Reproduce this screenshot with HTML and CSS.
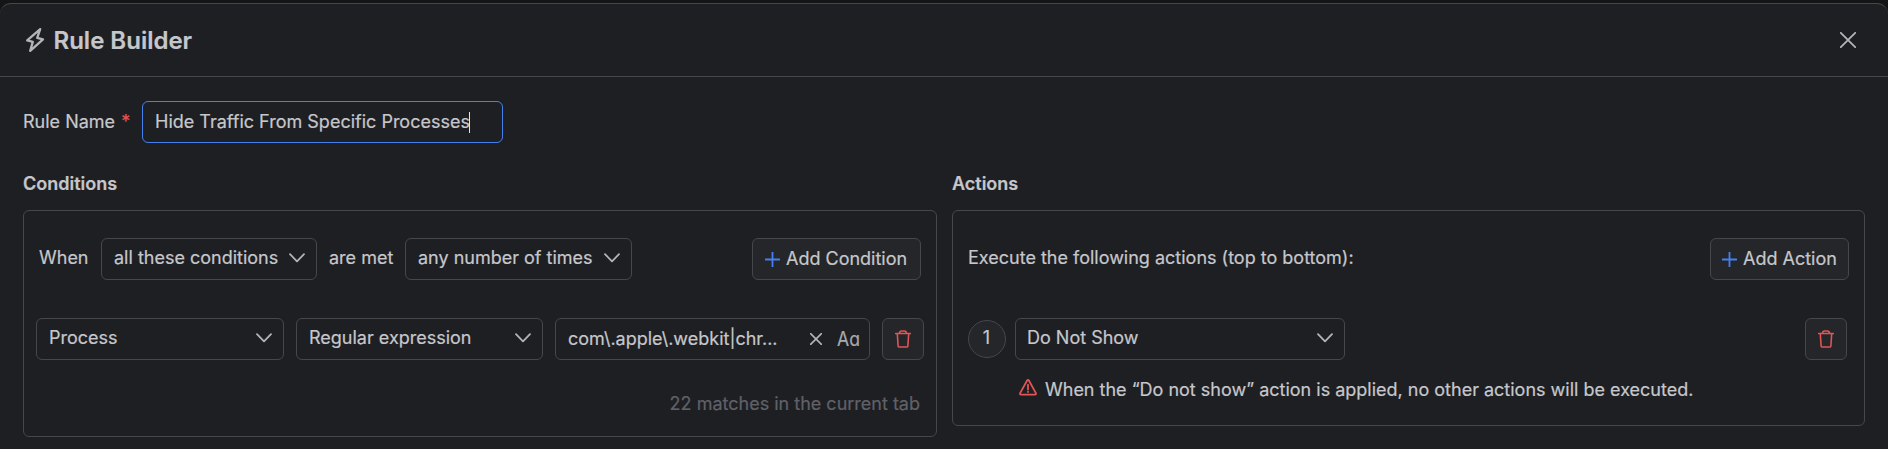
FILE: index.html
```html
<!DOCTYPE html>
<html lang="en">
<head>
<meta charset="utf-8">
<title>Rule Builder</title>
<link rel="stylesheet" href="styles.css">
</head>
<body>
<svg class="sprite" aria-hidden="true">
  <symbol id="chevron" viewBox="0 0 16 10"><path d="M1 1.2 8 8.4 15 1.2"/></symbol>
  <symbol id="plus" viewBox="0 0 15 15"><path d="M7.5 .5v14M.5 7.5h14"/></symbol>
  <symbol id="cross" viewBox="0 0 16 16"><path d="M.8 .8 15.2 15.2M15.2 .8 .8 15.2"/></symbol>
  <symbol id="cross-small" viewBox="0 0 12 12"><path d="M.6 .6 11.4 11.4M11.4 .6 .6 11.4"/></symbol>
  <symbol id="trash" viewBox="0 0 16 18"><path d="M.7 3.5h14.6M4.4 3.4q.3-2.4 2-2.4h3.2q1.7 0 2 2.4M2.3 3.8l.8 12c.1 .8 .5 1.2 1.2 1.2h7.4c.7 0 1.1-.4 1.2-1.2l.8-12"/></symbol>
</svg>
<main class="dialog">
  <header class="header">
    <svg class="bolt" viewBox="0 0 18 24"><path d="M14.2 1.2 1.2 12.4 6.8 13.9 4.2 22.8 17 11.4 11.2 9.9Z"/></svg>
    <h1 class="title">Rule Builder</h1>
    <button class="close" aria-label="Close"><svg><use href="#cross"/></svg></button>
  </header>
  <div class="name-row">
    <label class="name-label">Rule Name <span class="required">*</span></label>
    <div class="field name-field"><span>Hide Traffic From Specific Processes</span><i class="caret"></i></div>
  </div>
  <div class="columns">
    <section class="column">
      <h2 class="heading">Conditions</h2>
      <div class="panel conditions">
        <div class="bar">
          <span class="when">When</span>
          <div class="field select scope"><span>all these conditions</span><svg class="chevron"><use href="#chevron"/></svg></div>
          <span class="met">are met</span>
          <div class="field select times"><span>any number of times</span><svg class="chevron"><use href="#chevron"/></svg></div>
          <button class="field button add-condition"><svg class="plus"><use href="#plus"/></svg><span>Add Condition</span></button>
        </div>
        <div class="condition">
          <div class="field select"><span>Process</span><svg class="chevron"><use href="#chevron"/></svg></div>
          <div class="field select"><span>Regular expression</span><svg class="chevron"><use href="#chevron"/></svg></div>
          <div class="field pattern"><span>com\.apple\.webkit|chr...</span><svg class="clear"><use href="#cross-small"/></svg><span class="case">Aa</span></div>
          <button class="field button delete" aria-label="Delete"><svg class="trash"><use href="#trash"/></svg></button>
        </div>
        <p class="matches">22 matches in the current tab</p>
      </div>
    </section>
    <section class="column">
      <h2 class="heading">Actions</h2>
      <div class="panel actions">
        <div class="bar">
          <span class="execute">Execute the following actions (top to bottom):</span>
          <button class="field button add-action"><svg class="plus"><use href="#plus"/></svg><span>Add Action</span></button>
        </div>
        <div class="action">
          <span class="number">1</span>
          <div class="field select kind"><span>Do Not Show</span><svg class="chevron"><use href="#chevron"/></svg></div>
          <button class="field button delete" aria-label="Delete"><svg class="trash"><use href="#trash"/></svg></button>
        </div>
        <p class="warning"><svg class="alert" viewBox="0 0 18 17"><path d="M8.1 1.5q.9-1.3 1.8 0l7 12.6q.5 1.5-1 1.6H2.1q-1.5-.1-1-1.6ZM9 5.6v5M9 12.6v.5"/></svg><span>When the “Do not show” action is applied, no other actions will be executed.</span></p>
      </div>
    </section>
  </div>
</main>
</body>
</html>
```

FILE: styles.css
```css
* { box-sizing: border-box; }
body {
  margin: 0;
  padding-top: 3px;
  height: 449px;
  overflow: hidden;
  background: #141517;
  color: #c6c7cb;
  font: 18px/22px Inter, "Liberation Sans", sans-serif;
  -webkit-text-stroke: .2px;
}
svg { fill: none; stroke: #b3b4b8; stroke-width: 1.8; stroke-linecap: round; stroke-linejoin: round; flex: none; overflow: visible; }
.sprite { position: absolute; width: 0; height: 0; }
h1, h2, p { margin: 0; }
button { font: inherit; color: inherit; }
.dialog { height: 460px; background: #1e1f23; border-top: 1px solid #46474d; border-radius: 11px 11px 0 0; }
.header { display: flex; align-items: center; height: 73px; padding: 0 32px 0 26px; border-bottom: 1px solid #46474d; }
.bolt { width: 18px; height: 24px; stroke-width: 2.3; }
.title { margin-left: 9.5px; padding-top: 2px; font-size: 24px; line-height: 30px; font-weight: 600; }
.close { margin-left: auto; width: 16px; height: 16px; padding: 0; border: 0; background: none; }
.close svg { display: block; width: 16px; height: 16px; }
.name-row { display: flex; align-items: center; height: 42px; margin: 24px 0 0 23px; }
.name-label { width: 119px; white-space: nowrap; }
.required { color: #e05555; margin-left: 1px; }
.field { display: flex; align-items: center; height: 42px; border: 1px solid #46474d; border-radius: 6px; white-space: nowrap; }
.name-field { width: 361px; padding-left: 12px; border-color: #4480f0; }
.caret { width: 1px; height: 21px; margin-left: -1px; background: #e4e5e8; }
.columns { display: grid; grid-template-columns: 914px 913px; gap: 15px; padding: 30px 23px 0; }
.heading { font-size: 18px; line-height: 22px; font-weight: 600; }
.panel { margin-top: 15px; border: 1px solid #46474d; border-radius: 6px; }
.conditions { height: 227px; padding: 27px 12px 0; }
.actions { height: 216px; padding: 27px 15px 0; }
.bar { display: flex; align-items: center; height: 42px; }
.when { width: 65px; padding-left: 3px; }
.select { justify-content: space-between; padding: 0 11px 2px 12px; }
.chevron { width: 16px; height: 10px; }
.scope { width: 216px; }
.met { width: 88px; padding-left: 12px; }
.times { width: 227px; }
.when, .met, .execute { padding-bottom: 2px; white-space: nowrap; }
.button { background: #25262a; padding: 0 12px; gap: 6px; }
.plus { width: 15px; height: 15px; stroke: #4480f0; }
.add-condition { width: 169px; margin: 0 3px 0 auto; }
.add-action { width: 139px; padding-left: 11px; margin-left: auto; }
.condition { display: grid; grid-template-columns: 248px 247px 315px 42px; gap: 12px; margin-top: 38px; }
.pattern { padding: 0 10px 0 12px; }
.clear { width: 12px; height: 12px; margin-left: auto; stroke-width: 1.6; }
.case { width: 22px; margin-left: 15px; color: #a8a9ad; font-size: 20px; font-feature-settings: "cv11"; transform: scaleX(.88); transform-origin: left; }
.delete { width: 42px; padding: 0; justify-content: center; }
.trash { width: 16px; height: 18px; stroke: #e05555; stroke-width: 1.6; }
.matches { margin: 33px 4px 0 0; text-align: right; color: #606168; }
.action { display: flex; align-items: center; margin-top: 38px; }
.number { display: flex; align-items: center; justify-content: center; width: 38px; height: 38px; margin-right: 9px; padding: 0 1px 2px 0; border: 1px solid #46474d; border-radius: 50%; background: #25262a; }
.kind { width: 330px; padding-left: 11px; }
.action .delete { margin: 0 2px 0 auto; }
.warning { display: flex; align-items: flex-start; margin: 19px 0 0 51px; gap: 8px; white-space: nowrap; }
.alert { width: 18px; height: 17px; stroke: #e05555; }
```
